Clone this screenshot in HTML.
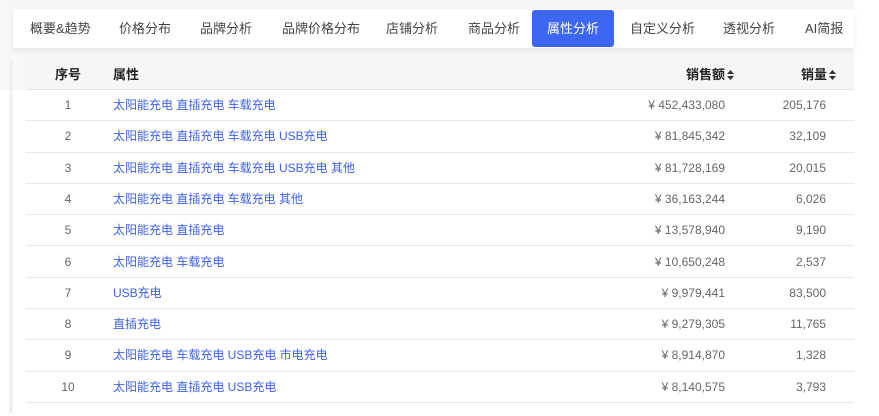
<!DOCTYPE html>
<html><head><meta charset="utf-8"><style>
*{margin:0;padding:0;box-sizing:border-box}
body{width:879px;height:416px;background:#fff;font-family:"Liberation Sans","Noto Sans CJK SC",sans-serif;position:relative;overflow:hidden}
.topbg{position:absolute;left:0;top:0;width:854px;height:60px;background:#f6f7f8}
.lbg{position:absolute;left:0;top:0;width:26px;height:90px;background:#f6f7f8}
.strip{position:absolute;left:9px;top:60px;width:4px;height:353px;background:#f0f1f3}
.tabs{position:absolute;left:13px;top:9px;width:841px;height:39px;background:#fff;box-shadow:0 3px 6px rgba(0,0,0,.08)}
.tab{position:absolute;top:1px;height:37px;line-height:37px;font-size:13px;color:#444;white-space:nowrap}
.tab.on{background:#3d67f2;color:#fff;border-radius:3px;width:82px;text-align:center}
.thead{position:absolute;left:26px;top:60px;width:828px;height:30px;background:#f5f6f8;border-bottom:1px solid #e4e6ea}
.th{position:absolute;top:0;line-height:30px;font-size:13px;font-weight:bold;color:#222;white-space:nowrap}
.row{position:absolute;left:26px;width:828px;height:31.3px;border-bottom:1px solid #e8e9ec}
.c{position:absolute;top:0;line-height:30px;font-size:12px;color:#666;white-space:nowrap}
.a{color:#3f62e6}
svg{vertical-align:-1px;margin-left:2px}
</style></head><body>
<div class="topbg"></div><div class="lbg"></div><div class="strip"></div>
<div class="tabs">
<div class="tab" style="left:17px">概要&amp;趋势</div>
<div class="tab" style="left:106px">价格分布</div>
<div class="tab" style="left:187px">品牌分析</div>
<div class="tab" style="left:269px">品牌价格分布</div>
<div class="tab" style="left:373px">店铺分析</div>
<div class="tab" style="left:455px">商品分析</div>
<div class="tab on" style="left:519px">属性分析</div>
<div class="tab" style="left:617px">自定义分析</div>
<div class="tab" style="left:710px">透视分析</div>
<div class="tab" style="left:792px">AI简报</div>
</div>
<div class="thead">
<div class="th" style="left:22px;width:40px;text-align:center">序号</div>
<div class="th" style="left:87px">属性</div>
<div class="th" style="right:120px">销售额<svg width="7" height="10" viewBox="0 0 7 10"><path d="M3.5 0L7 4H0Z M3.5 10L7 6H0Z" fill="#333"/></svg></div>
<div class="th" style="right:18px">销量<svg width="7" height="10" viewBox="0 0 7 10"><path d="M3.5 0L7 4H0Z M3.5 10L7 6H0Z" fill="#333"/></svg></div>
</div>
<div id="rows"></div>
<script>
var d=[["太阳能充电 直插充电 车载充电","452,433,080","205,176"],["太阳能充电 直插充电 车载充电 USB充电","81,845,342","32,109"],["太阳能充电 直插充电 车载充电 USB充电 其他","81,728,169","20,015"],["太阳能充电 直插充电 车载充电 其他","36,163,244","6,026"],["太阳能充电 直插充电","13,578,940","9,190"],["太阳能充电 车载充电","10,650,248","2,537"],["USB充电","9,979,441","83,500"],["直插充电","9,279,305","11,765"],["太阳能充电 车载充电 USB充电 市电充电","8,914,870","1,328"],["太阳能充电 直插充电 USB充电","8,140,575","3,793"]];
var h="";for(var i=0;i<10;i++){var t=90+i*31.3;h+='<div class="row" style="top:'+t+'px"><div class="c" style="left:22px;width:40px;text-align:center">'+(i+1)+'</div><div class="c a" style="left:87px">'+d[i][0]+'</div><div class="c" style="right:129px">¥ '+d[i][1]+'</div><div class="c" style="right:28px">'+d[i][2]+'</div></div>';}
document.getElementById("rows").innerHTML=h;
</script>
</body></html>
